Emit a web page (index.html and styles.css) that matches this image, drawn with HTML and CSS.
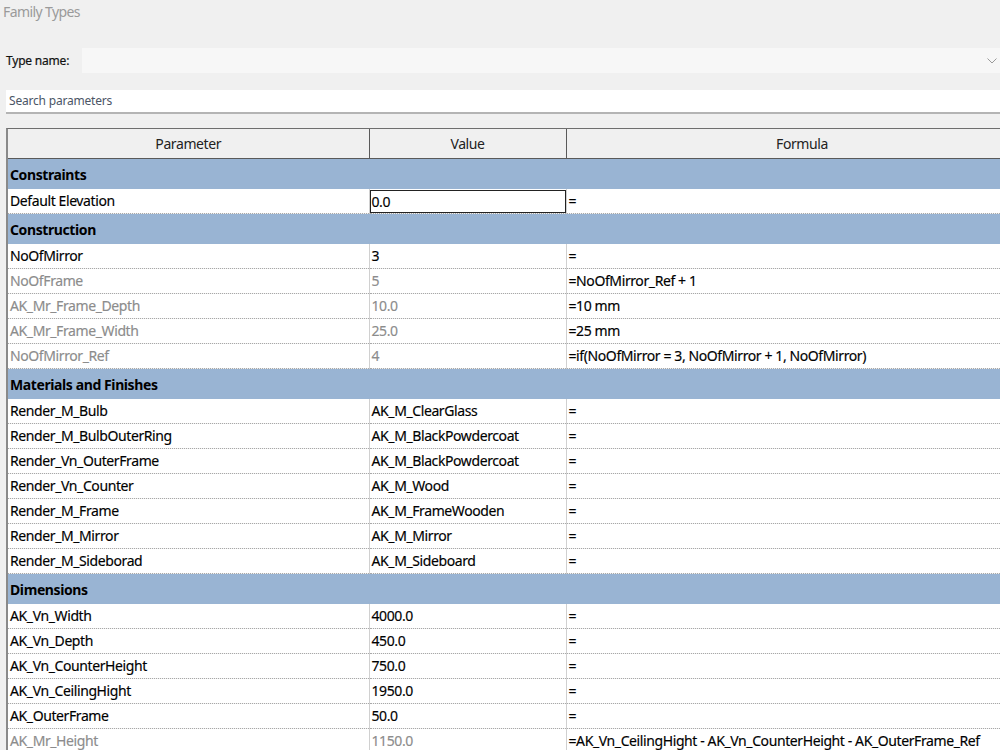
FILE: index.html
```html
<!DOCTYPE html>
<html>
<head>
<meta charset="utf-8">
<link rel="stylesheet" href="styles.css">
</head>
<body>
<div class="dialog">
  <div class="title">Family Types</div>
  <div class="type-row">
    <span class="type-label">Type name:</span>
    <div class="combo">
      <svg class="chev" width="10" height="6" viewBox="0 0 10 6"><path d="M0.5 0.5 L5 5 L9.5 0.5" fill="none" stroke="#9a9a9a" stroke-width="1"/></svg>
    </div>
  </div>
  <div class="search">Search parameters</div>
  <div class="grid-wrap">
    <table class="grid">
      <colgroup><col class="c1"><col class="c2"><col class="c3"></colgroup>
      <thead>
        <tr><th>Parameter</th><th>Value</th><th>Formula</th></tr>
      </thead>
      <tbody>
        <tr class="group"><td colspan="3">Constraints</td></tr>
        <tr><td>Default Elevation</td><td class="edit"><span class="editbox">0.0</span></td><td>=</td></tr>
        <tr class="group"><td colspan="3">Construction</td></tr>
        <tr><td>NoOfMirror</td><td>3</td><td>=</td></tr>
        <tr class="dim"><td>NoOfFrame</td><td>5</td><td>=NoOfMirror_Ref + 1</td></tr>
        <tr class="dim"><td>AK_Mr_Frame_Depth</td><td>10.0</td><td>=10 mm</td></tr>
        <tr class="dim"><td>AK_Mr_Frame_Width</td><td>25.0</td><td>=25 mm</td></tr>
        <tr class="dim"><td>NoOfMirror_Ref</td><td>4</td><td>=if(NoOfMirror = 3, NoOfMirror + 1, NoOfMirror)</td></tr>
        <tr class="group"><td colspan="3">Materials and Finishes</td></tr>
        <tr><td>Render_M_Bulb</td><td>AK_M_ClearGlass</td><td>=</td></tr>
        <tr><td>Render_M_BulbOuterRing</td><td>AK_M_BlackPowdercoat</td><td>=</td></tr>
        <tr><td>Render_Vn_OuterFrame</td><td>AK_M_BlackPowdercoat</td><td>=</td></tr>
        <tr><td>Render_Vn_Counter</td><td>AK_M_Wood</td><td>=</td></tr>
        <tr><td>Render_M_Frame</td><td>AK_M_FrameWooden</td><td>=</td></tr>
        <tr><td>Render_M_Mirror</td><td>AK_M_Mirror</td><td>=</td></tr>
        <tr><td>Render_M_Sideborad</td><td>AK_M_Sideboard</td><td>=</td></tr>
        <tr class="group"><td colspan="3">Dimensions</td></tr>
        <tr><td>AK_Vn_Width</td><td>4000.0</td><td>=</td></tr>
        <tr><td>AK_Vn_Depth</td><td>450.0</td><td>=</td></tr>
        <tr><td>AK_Vn_CounterHeight</td><td>750.0</td><td>=</td></tr>
        <tr><td>AK_Vn_CeilingHight</td><td>1950.0</td><td>=</td></tr>
        <tr><td>AK_OuterFrame</td><td>50.0</td><td>=</td></tr>
        <tr class="dim"><td>AK_Mr_Height</td><td>1150.0</td><td>=AK_Vn_CeilingHight - AK_Vn_CounterHeight - AK_OuterFrame_Ref</td></tr>
      </tbody>
    </table>
  </div>
</div>
</body>
</html>
```

FILE: styles.css
```css
html, body {
  margin: 0;
  padding: 0;
  background: #f0f0f0;
  overflow: hidden;
}
body {
  width: 1000px;
  height: 750px;
  font-family: "Noto Sans", "Open Sans", sans-serif;
  color: #111;
}
.dialog {
  display: flex;
  flex-direction: column;
}
.title {
  height: 26px;
  line-height: 24px;
  padding-left: 3px;
  font-size: 14px;
  letter-spacing: -0.6px;
  color: #9a9a9a;
}
.type-row {
  display: flex;
  align-items: center;
  margin-top: 22px;
  height: 25px;
}
.type-label {
  width: 76px;
  padding-left: 6px;
  font-size: 12px;
  letter-spacing: -0.2px;
  color: #111;
  -webkit-text-stroke: 0.2px #111;
}
.combo {
  flex: 1;
  height: 25px;
  background: #f7f7f7;
  display: flex;
  align-items: center;
  justify-content: flex-end;
  padding-right: 3px;
}
.search {
  margin: 17px 0 0 6px;
  height: 22px;
  line-height: 22px;
  background: #fff;
  border-bottom: 2px solid #b4b4b4;
  padding-left: 3px;
  font-size: 12px;
  letter-spacing: -0.2px;
  color: #4b5566;
}
.grid-wrap {
  margin: 14px 0 0 6px;
  overflow: hidden;
  border-left: 2px solid #8a8a8a;
  border-top: 1px solid #6e6e6e;
}
.grid {
  border-collapse: collapse;
  table-layout: fixed;
  width: 1030px;
  font-size: 14px;
  letter-spacing: -0.4px;
}
.c1 { width: 361px; }
.c2 { width: 197px; }
.c3 { width: 472px; }
.grid th {
  height: 29px;
  padding: 0;
  font-weight: normal;
  background: #f0f0f0;
  border-right: 1px solid #5a5a5a;
  border-bottom: 1px solid #5a5a5a;
  color: #222;
  text-align: center;
}
.grid td {
  height: 24px;
  line-height: 24px;
  padding: 0 0 0 2px;
  background: #fff;
  white-space: nowrap;
  overflow: hidden;
  border-bottom: 1px dotted #a8a8a8;
  border-right: 1px solid #d0d0d0;
  color: #000;
  -webkit-text-stroke: 0.15px currentColor;
}
.grid tr.group td {
  height: 30px;
  line-height: 22px;
  padding-top: 5px;
  padding-bottom: 3px;
  box-sizing: border-box;
  background: #99b4d3;
  font-weight: bold;
  border-bottom: none;
  border-right: none;
  -webkit-text-stroke: 0;
}
.grid tr.dim td:nth-child(1),
.grid tr.dim td:nth-child(2) {
  color: #8c8c8c;
}
.grid td.edit {
  padding: 0;
}
.editbox {
  display: block;
  height: 21px;
  line-height: 21px;
  border: 1px solid #222;
  padding-left: 1px;
}
```
